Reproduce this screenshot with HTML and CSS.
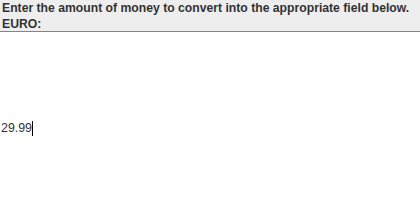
FILE: index.html
```html
<!DOCTYPE html>
<html>
<head>
<meta charset="utf-8">
<link rel="stylesheet" href="styles.css">
</head>
<body>
<div class="header">
  <div class="line">Enter the amount of money to convert into the appropriate field below.</div>
  <div class="line">EURO:</div>
</div>
<div class="field">
  <span class="value">29.99</span><span class="caret"></span>
</div>
</body>
</html>
```
FILE: styles.css
```css
html, body {
  margin: 0;
  padding: 0;
  background: #ffffff;
}
body {
  width: 420px;
  height: 221px;
  font-family: "Liberation Sans", Arial, sans-serif;
}
.header {
  background: #eeeeee;
  border-bottom: 1px solid #7a8795;
  padding: 0 2px;
  height: 31px;
  font-weight: bold;
  font-size: 12.2px;
  line-height: 16px;
  color: #333333;
}
.field {
  display: flex;
  align-items: flex-start;
  padding: 88px 0 0 1px;
  font-size: 12.4px;
  line-height: 16px;
  color: #333333;
}
.caret {
  display: block;
  width: 1px;
  height: 15px;
  margin: 1px 0 0 0;
  background: #000000;
}
```
